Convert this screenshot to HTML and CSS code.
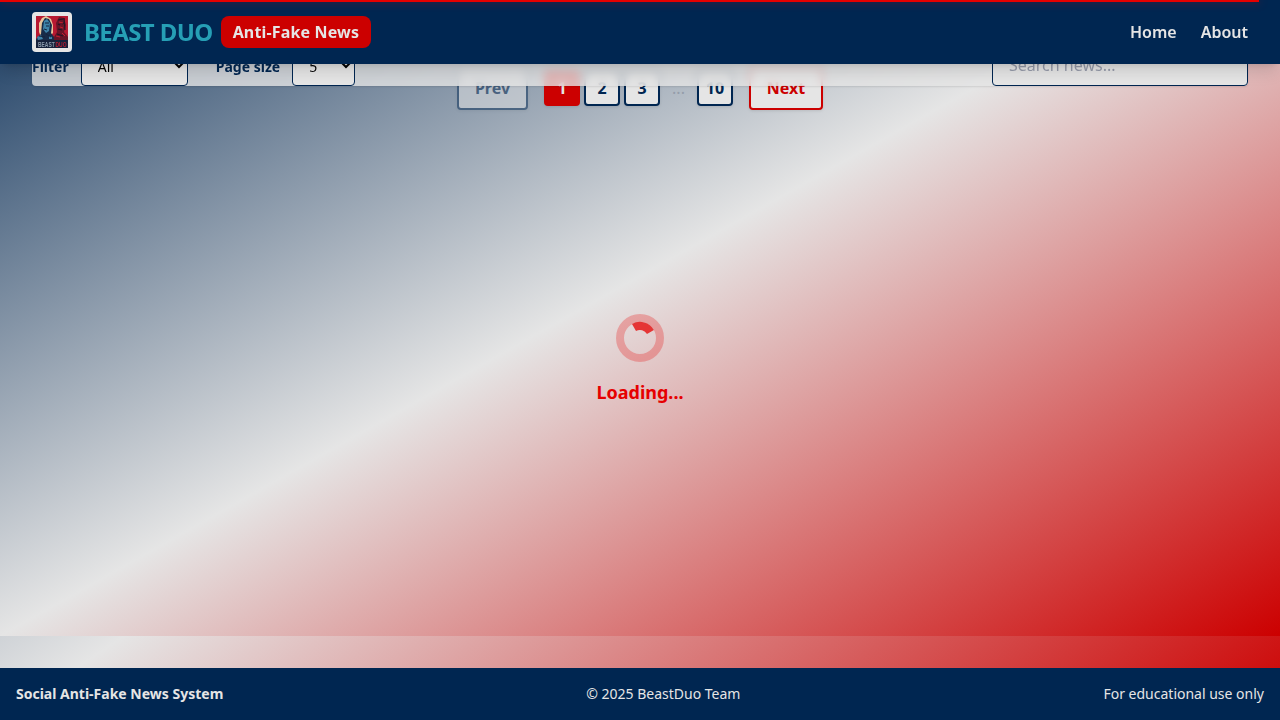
FILE: index.html
```html
<!DOCTYPE html>
<html lang="en">
<head>
<meta charset="utf-8">
<title>Beast Duo Anti-Fake News</title>
<link rel="stylesheet" href="styles.css">
</head>
<body>
<div class="progress"></div>
<header class="header">
  <div class="brand">
    <svg class="logo" viewBox="0 0 40 40" aria-label="Beast Duo">
      <rect width="40" height="40" rx="4" fill="#e5e5e5"/>
      <rect x="4" y="4" width="32" height="32" fill="#b71931"/>
      <path d="M7 20V11L10 6l4-2 5 3 2 6v8l-4 4H9z" fill="#e7c59b"/>
      <path d="M4 27l5-5 1-11 3-5 4 1 3 6-1 8 3 4v5H4z" fill="#172c49"/>
      <path d="M12 9l3-2 3 4-1 8-3 2-3-4zM5 25l4-2 2 4-5 1zM17 24l3 1v2h-3z" fill="#3e83a8"/>
      <path d="M13 11h4M14 14h3M12 17l3 1M7 24l6 1M14 22l5 3" stroke="#15243e" stroke-width="1"/>
      <path d="M22 25l3-5-1-9 3-6 5 1 2 7-2 7 4 5v3H22z" fill="#671426"/>
      <path d="M26 8l5-1M26 12l2 1M30 12l2-1M26 17l4 1M25 22l6 2M32 6l1 12" stroke="#211525" stroke-width="1.2"/>
      <path d="M27 10l4 1M28 15l3 1M24 24l4 1M30 21l3 3" stroke="#c51c2e"/>
      <rect x="4" y="28" width="32" height="8" fill="#17223b"/>
      <g class="logo-text"><text transform="translate(6 35.4) scale(.62 1)">BEAST</text><text class="duo" transform="translate(23.5 35.4) scale(.62 1)">DUO</text></g>
    </svg>
    <span class="name">BEAST DUO</span>
    <span class="tag">Anti-Fake News</span>
  </div>
  <nav class="nav"><a>Home</a><a>About</a></nav>
</header>
<main class="main">
  <section class="toolbar">
    <div class="filters">
      <label class="label">Filter</label>
      <select class="select filter-select"><option>All</option></select>
      <label class="label size-label">Page size</label>
      <select class="select size-select"><option>5</option></select>
    </div>
    <input class="search" placeholder="Search news...">
  </section>
  <div class="pagination">
    <button class="step prev">Prev</button>
    <div class="pages">
      <button class="page active">1</button><button class="page">2</button><button class="page">3</button><span class="dots">...</span><button class="page">10</button>
    </div>
    <button class="step next">Next</button>
  </div>
</main>
<div class="loading">
  <svg class="spinner" viewBox="0 0 48 48"><circle cx="24" cy="24" r="20" fill="none" stroke="#e60000" stroke-opacity=".26" stroke-width="8"/><path d="M16 10A16 16 0 0 1 37.9 15.9L31 20A8 8 0 0 0 20 17Z" fill="#e60000" fill-opacity=".75"/></svg>
  <div class="loading-text">Loading...</div>
</div>
<footer class="footer"><strong>Social Anti-Fake News System</strong><span>© 2025 BeastDuo Team</span><span>For educational use only</span></footer>
</body>
</html>
```
FILE: styles.css
```css
* { box-sizing: border-box; }
body { margin: 0; height: 720px; overflow: hidden; position: relative; display: flex; flex-direction: column; font: 16px/24px "Noto Sans", sans-serif; color: #002651; background: linear-gradient(to bottom right, #002651 0%, #e5e5e5 50%, #cc0000 100%) 0 -148px / 100% 868px; }
button, input, select { font: inherit; color: inherit; margin: 0; }
.progress { position: absolute; z-index: 5; top: 0; left: 0; width: 1259px; height: 2px; background: #e60000; box-shadow: 0 0 8px rgba(230,0,0,.6); }
.header { position: relative; z-index: 3; flex: none; height: 64px; padding: 0 32px; display: flex; align-items: center; justify-content: space-between; background: #002651; color: #e5e5e5; box-shadow: 0 10px 15px -3px rgba(0,0,0,.13), 0 4px 6px -4px rgba(0,0,0,.13); }
.brand, .nav, .filters, .pages { display: flex; align-items: center; }
.logo { width: 40px; height: 40px; margin-right: 12px; }
.logo-text { font: bold 8px "Liberation Sans", sans-serif; fill: #8c9aab; }
.duo { fill: #b71d31; }
.name { font-size: 24px; line-height: 32px; font-weight: 700; letter-spacing: -.6px; color: #269fb5; margin-right: 8px; }
.tag { background: #cc0000; border-radius: 8px; padding: 4px 12px; font-weight: 700; letter-spacing: .16px; }
.nav { gap: 24px; font-weight: 600; }
.main { flex: none; height: 572px; background: linear-gradient(to bottom right, #002651 0%, #e5e5e5 50%, #cc0000 100%) 0 -148px / 100% 720px; }
.toolbar { position: relative; z-index: 2; height: 42px; margin: -20px 32px 0; display: flex; justify-content: space-between; align-items: stretch; border-radius: 4px; background: rgba(229,229,229,.8); backdrop-filter: blur(4px); box-shadow: 0 1px 2px rgba(0,0,0,.1); }
.label { font-size: 14px; font-weight: 700; line-height: 20px; margin-top: 4px; }
.select { height: 42px; border: 1px solid #002651; border-radius: 4px; background: #e5e5e5; color: #000; padding: 3px 12px 0; font-size: 14px; }
.filter-select { width: 107px; margin-left: 12px; }
.size-label { margin-left: 28px; }
.size-select { width: 63px; margin-left: 12px; }
.search { width: 256px; height: 42px; border: 1px solid #002651; border-radius: 4px; padding: 0 16px; background: #e5e5e5; }
.search::placeholder { color: #969baa; }
.pagination { display: flex; justify-content: center; align-items: center; gap: 16px; margin-top: -20px; }
.step, .page { padding: 0; border: 2px solid #002651; border-radius: 4px; background: #e5e5e5; color: #002651; font-weight: 700; box-shadow: 0 1px 3px rgba(0,0,0,.1); }
.step { height: 44px; }
.prev { width: 71px; opacity: .5; }
.next { width: 74px; color: #cc0000; border-color: #cc0000; }
.pages { gap: 4px; }
.page { width: 36px; height: 36px; }
.active { background: #cc0000; border-color: #cc0000; color: #e5e5e5; }
.dots { width: 29px; text-align: center; color: #949daa; }
.loading { position: absolute; z-index: 4; top: 314px; left: 0; right: 0; display: flex; flex-direction: column; align-items: center; gap: 16px; }
.spinner { width: 48px; height: 48px; }
.loading-text { color: #e60000; font-size: 18px; line-height: 28px; font-weight: 700; }
.footer { height: 52px; margin-top: auto; display: flex; justify-content: space-between; align-items: center; padding: 0 16px; background: #002651; color: #e5e5e5; font-size: 14px; line-height: 20px; }
```
